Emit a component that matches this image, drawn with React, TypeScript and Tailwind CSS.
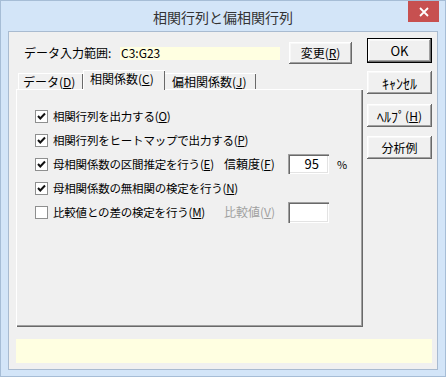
import React from "react"

const font = { fontFamily: '"Noto Sans CJK JP", "Noto Sans", sans-serif' }

const raised =
  "bg-[#f0f0f0] shadow-[inset_-1px_-1px_#696969,inset_1px_1px_#ffffff,inset_-2px_-2px_#a0a0a0,inset_2px_2px_#f8f8f8]"
const sunken =
  "bg-white shadow-[inset_1px_1px_#a0a0a0,inset_2px_2px_#696969,inset_-1px_-1px_#ffffff,inset_-2px_-2px_#e3e3e3]"

function Check({ checked }: { checked: boolean }) {
  return (
    <div className="w-[13px] h-[13px] border border-[#8e8f8f] bg-white flex items-center justify-center shrink-0">
      {checked && (
        <svg width="11" height="11" viewBox="0 0 11 11">
          <path d="M2 5 L4.3 7.5 L9 2.5" fill="none" stroke="#111" strokeWidth="2" />
        </svg>
      )}
    </div>
  )
}

function Btn({ children, className = "" }: { children: React.ReactNode; className?: string }) {
  return (
    <div className={`${raised} flex items-center justify-center text-black whitespace-nowrap ${className}`}>
      {children}
    </div>
  )
}

function Row({ checked, children }: { checked: boolean; children: React.ReactNode }) {
  return (
    <div className="flex items-center gap-[5px] w-[189px] shrink-0">
      <Check checked={checked} />
      <span className="whitespace-nowrap text-[11.5px] tracking-[-0.2px]">{children}</span>
    </div>
  )
}

export default function App() {
  return (
    <div
      className="w-[446px] h-[377px] bg-[#d3e5f8] border border-[#a6bdd6] flex flex-col text-[12px] leading-[14px] text-black"
      style={font}
    >
      {/* title bar */}
      <div className="h-[30px] flex items-start">
        <div className="w-[37px]" />
        <div className="flex-1 text-center text-[14px] leading-[16px] pt-[8px] text-[#333]">
          相関行列と偏相関行列
        </div>
        <div className="w-[31px] h-[21px] mr-[6px] bg-[#c75050] flex items-center justify-center">
          <svg width="10" height="10" viewBox="0 0 10 10">
            <path d="M1 1 L9 9 M9 1 L1 9" stroke="#fff" strokeWidth="1.8" />
          </svg>
        </div>
      </div>

      {/* client */}
      <div className="mx-[7px] mb-[6px] flex-1 border border-[#a9bbd0] bg-[#f0f0f0] flex flex-col">
        <div className="flex pl-[7px]">
          <div className="w-[347px] flex flex-col">
            <div className="mt-[10px] h-[22px] flex items-center">
              <span className="pl-[8px] w-[104px] whitespace-nowrap">データ入力範囲:</span>
              <div className="w-[160px] h-[13px] bg-[#ffffe1] flex items-center pl-[1px]">C3:G23</div>
              <Btn className="ml-[9px] w-[63px] h-[22px] text-[12px]">
                変更(<u>R</u>)
              </Btn>
            </div>

            {/* tabs */}
            <div className="mt-[6px] h-[19px] flex items-end pl-[2px]">
              <div className="w-[65px] h-[16px] border-t border-l border-white shadow-[inset_-1px_0_#696969] flex items-center pl-[4px] whitespace-nowrap">
                データ(<u>D</u>)
              </div>
              <div className="relative z-10 w-[82px] h-[20px] -mb-px bg-[#f0f0f0] border-t border-l border-white shadow-[inset_-1px_0_#696969] flex items-start pt-[1px] pl-[6px] whitespace-nowrap">
                相関係数(<u>C</u>)
              </div>
              <div className="w-[91px] h-[16px] border-t border-white shadow-[inset_-1px_0_#696969] flex items-center pl-[7px] whitespace-nowrap">
                偏相関係数(<u>J</u>)
              </div>
            </div>

            {/* panel */}
            <div className="h-[238px] border-t border-l border-white shadow-[inset_-1px_-1px_#696969,inset_-2px_-2px_#a0a0a0] flex flex-col pt-[14px] pl-[18px]">
              <div className="h-[24px] flex items-center">
                <Row checked>相関行列を出力する(<u>O</u>)</Row>
              </div>
              <div className="h-[24px] flex items-center">
                <Row checked>相関行列をヒートマップで出力する(<u>P</u>)</Row>
              </div>
              <div className="h-[24px] flex items-center">
                <Row checked>母相関係数の区間推定を行う(<u>E</u>)</Row>
                <span className="w-[64px] whitespace-nowrap">信頼度(<u>F</u>)</span>
                <div className={`${sunken} w-[41px] h-[20px] flex items-center justify-end pr-[10px] text-[13px]`}>95</div>
                <span className="ml-[8px] text-[11px]">%</span>
              </div>
              <div className="h-[24px] flex items-center">
                <Row checked>母相関係数の無相関の検定を行う(<u>N</u>)</Row>
              </div>
              <div className="h-[24px] flex items-center">
                <Row checked={false}>比較値との差の検定を行う(<u>M</u>)</Row>
                <span className="w-[64px] whitespace-nowrap text-[#a0a0a0]">比較値(<u>V</u>)</span>
                <div className={`${sunken} w-[41px] h-[21px]`} />
              </div>
            </div>
          </div>

          {/* buttons */}
          <div className="ml-[4px] w-[65px] flex flex-col">
            <Btn className="mt-[6px] h-[25px] border border-black text-[13px]">OK</Btn>
            <Btn className="mt-[8px] h-[23px] text-[14px]">ｷｬﾝｾﾙ</Btn>
            <Btn className="mt-[10px] h-[23px] text-[14px]">
              ﾍﾙﾌﾟ<span className="text-[12px]">(<u>H</u>)</span>
            </Btn>
            <Btn className="mt-[9px] h-[23px] text-[12px]">分析例</Btn>
          </div>
        </div>

        <div className="mt-auto ml-[7px] mr-[5px] mb-[6px] h-[24px] bg-[#ffffe1]" />
      </div>
    </div>
  )
}
